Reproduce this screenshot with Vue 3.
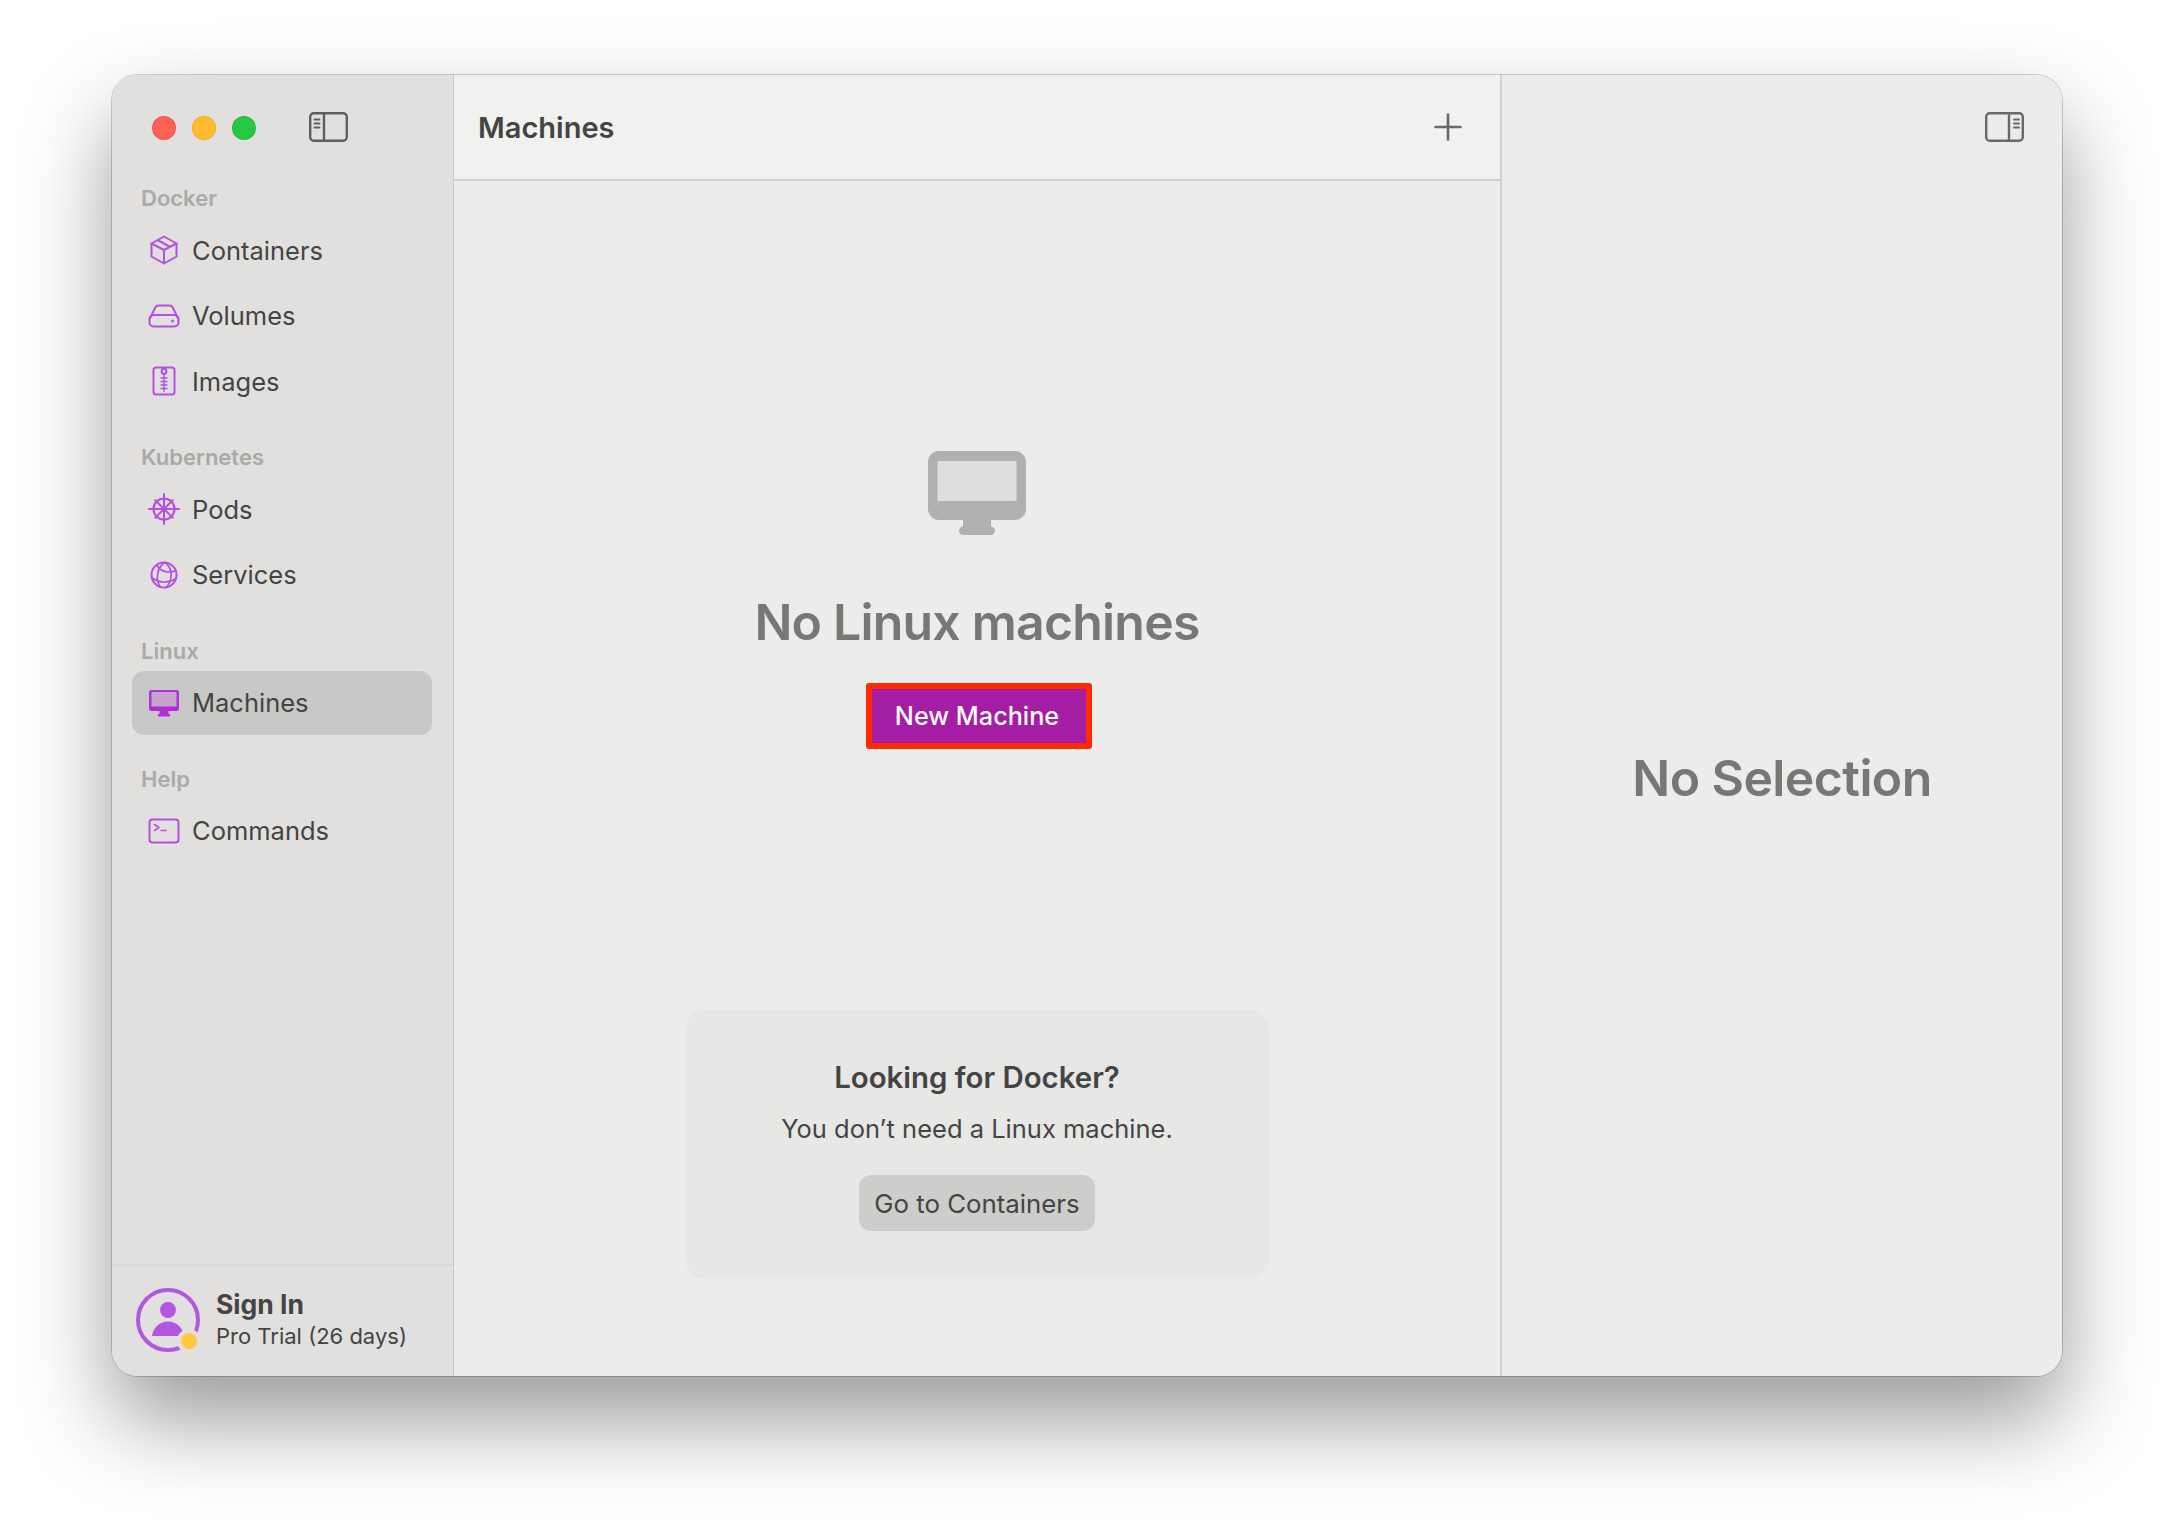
<script setup>
const sections = [
  { title: 'Docker', items: [{ label: 'Containers', icon: 'cube' }, { label: 'Volumes', icon: 'drive' }, { label: 'Images', icon: 'zip' }] },
  { title: 'Kubernetes', items: [{ label: 'Pods', icon: 'helm' }, { label: 'Services', icon: 'globe' }] },
  { title: 'Linux', items: [{ label: 'Machines', icon: 'mac', active: true }] },
  { title: 'Help', items: [{ label: 'Commands', icon: 'term' }] },
]
const spokes = [0, 45, 90, 135, 180, 225, 270, 315]
</script>

<template>
  <div class="page">
    <div class="window">
      <aside class="sidebar">
        <div class="titlebar">
          <span class="light red"></span>
          <span class="light yellow"></span>
          <span class="light green"></span>
          <svg class="toggle" width="39" height="30" viewBox="0 0 39 30" fill="none" stroke="#5e5e5c">
            <rect x="1.2" y="1.2" width="36.6" height="27.6" rx="3.5" stroke-width="2.4" />
            <path d="M15 1.5V28.5" stroke-width="2.4" />
            <path d="M5.5 7.5H10.5M5.5 11.5H10.5M5.5 15.5H10.5" stroke-width="1.8" stroke-linecap="round" />
          </svg>
        </div>
        <nav class="nav">
          <section v-for="s in sections" :key="s.title" class="section">
            <h3 class="section-title">{{ s.title }}</h3>
            <div class="rows">
              <div v-for="it in s.items" :key="it.label" class="row" :class="{ active: it.active }">
                <svg class="icon" width="32" height="32" viewBox="0 0 32 32" fill="none" stroke="#b44fe0" stroke-width="2" stroke-linecap="round" stroke-linejoin="round">
                  <template v-if="it.icon === 'cube'">
                    <path d="M16 2.500L28.500 9.500V22.500L16 29.500L3.500 22.500V9.500Z" />
                    <path d="M3.500 9.500L16 16L28.500 9.500M16 16V29.500M9.500 6L22 12.800" />
                  </template>
                  <template v-else-if="it.icon === 'drive'">
                    <rect x="1.5" y="15" width="29" height="11.5" rx="4" />
                    <path d="M2.5 17.5L7 7.8Q8 5.5 10.5 5.5H21.5Q24 5.5 25 7.8L29.5 17.5" />
                    <circle cx="24.5" cy="21" r="1.5" fill="#b44fe0" stroke="none" />
                  </template>
                  <template v-else-if="it.icon === 'zip'">
                    <rect x="5.5" y="2.5" width="21" height="27" rx="2.5" />
                    <circle cx="16" cy="6.5" r="2.4" />
                    <path d="M16 9V26.5M13 13H19M13 16.5H19M13 20H19M13 23.5H19" stroke-width="1.4" />
                  </template>
                  <template v-else-if="it.icon === 'helm'">
                    <circle cx="16" cy="16" r="10.5" stroke-width="2.200" />
                    <circle cx="16" cy="16" r="2.6" fill="#b44fe0" stroke="none" />
                    <path v-for="a in spokes" :key="a" :transform="`rotate(${a} 16 16)`" :d="a % 90 === 0 ? 'M16 16V1' : 'M16 16V3.5'" stroke-width="2" />
                  </template>
                  <template v-else-if="it.icon === 'globe'">
                    <circle cx="16" cy="16" r="12.5" />
                    <path d="M17 3.500C9 8 7 21 12.500 28M17 3.500C25 9 25 22 18 28.500M9 6.500C13 13 21 14.500 28 11.500M3.800 18.500C10 24 20 24.500 27.500 20" stroke-width="1.700" />
                  </template>
                  <template v-else-if="it.icon === 'mac'">
                    <rect x="1" y="3" width="30" height="21" rx="2.5" fill="#b02fd8" stroke="none" />
                    <rect x="3.5" y="5" width="25" height="14.5" fill="#c6a6cc" stroke="none" />
                    <path d="M11.5 24H20.5V27H22V29.5H10V27H11.5Z" fill="#b02fd8" stroke="none" />
                  </template>
                  <template v-else>
                    <rect x="1.5" y="4.5" width="29" height="23" rx="3" />
                    <path d="M6.5 9.5L11 12.5L6.5 15.5M13 15.500H18" stroke-width="1.6" />
                  </template>
                </svg>
                <span class="row-label">{{ it.label }}</span>
              </div>
            </div>
          </section>
        </nav>
        <div class="account">
          <svg class="avatar" width="64" height="64" viewBox="0 0 64 64">
            <circle cx="32" cy="32" r="30" fill="none" stroke="#b457e0" stroke-width="4" />
            <circle cx="32" cy="22" r="8" fill="#b457e0" />
            <path d="M16 48C17 40 23 33.500 32 33.500C41 33.500 47 40 48 48Z" fill="#b457e0" />
            <circle cx="53" cy="53" r="12" fill="#e1e0de" />
            <circle cx="53" cy="53" r="8" fill="#fdc93f" />
          </svg>
          <div class="account-text">
            <div class="account-name">Sign In</div>
            <div class="account-plan">Pro Trial (26 days)</div>
          </div>
        </div>
      </aside>

      <main class="main">
        <header class="main-header">
          <h1 class="main-title">Machines</h1>
          <svg width="28" height="28" viewBox="0 0 28 28" stroke="#686866" stroke-width="2.6" stroke-linecap="round">
            <path d="M14 1.500V26.500M1.500 14H26.500" />
          </svg>
        </header>
        <div class="main-body">
          <svg class="monitor" width="98" height="84" viewBox="0 0 98 84">
            <rect width="98" height="69" rx="11" fill="#b0b0ae" />
            <rect x="9.500" y="10" width="79" height="40" rx="1" fill="#dfdedd" />
            <rect x="35" y="68" width="28" height="10" fill="#b0b0ae" />
            <rect x="31" y="75.500" width="36" height="8.500" rx="4.200" fill="#b0b0ae" />
          </svg>
          <h2 class="empty-title">No Linux machines</h2>
          <button class="new-btn">New Machine</button>
          <div class="docker-card">
            <div class="card-title">Looking for Docker?</div>
            <div class="card-text">You don’t need a Linux machine.</div>
            <button class="card-btn">Go to Containers</button>
          </div>
        </div>
      </main>

      <aside class="detail">
        <svg class="detail-toggle" width="39" height="30" viewBox="0 0 39 30" fill="none" stroke="#686866">
          <rect x="1.2" y="1.2" width="36.6" height="27.6" rx="3.5" stroke-width="2.4" />
          <path d="M24 1.500V28.500" stroke-width="2.400" />
          <path d="M29 7.500H34M29 11.500H34M29 15.500H34" stroke-width="1.800" stroke-linecap="round" />
        </svg>
        <div class="no-selection">No Selection</div>
      </aside>
    </div>
  </div>
</template>

<style>
html, body { margin: 0; background: #fff; }
</style>

<style scoped>
.page {
  height: 1524px;
  box-sizing: border-box;
  padding: 75px 112px 0;
  font-family: Inter, "Liberation Sans", sans-serif;
  color: #444443;
  overflow: hidden;
}
.window {
  width: 1950px;
  height: 1301px;
  display: flex;
  border-radius: 26px;
  overflow: hidden;
  box-shadow: 0 0 0 1px rgba(0, 0, 0, .18), 0 44px 90px rgba(0, 0, 0, .4);
}
.sidebar {
  width: 342px;
  flex: none;
  box-sizing: border-box;
  display: flex;
  flex-direction: column;
  background: #e1e0de;
  border-right: 1px solid #c9c9c7;
}
.titlebar {
  height: 101px;
  padding: 2px 0 0 40px;
  display: flex;
  align-items: center;
  gap: 16px;
}
.light { width: 24px; height: 24px; border-radius: 50%; box-sizing: border-box; border: 1px solid rgba(0,0,0,.08); }
.red { background: #ff5f57; }
.yellow { background: #febc2e; }
.green { background: #28c840; }
.toggle { margin: -2px 0 0 37px; }
.nav { flex: 1; }
.section { margin-bottom: 24px; }
.section-title {
  margin: 0;
  height: 40px;
  padding-left: 29px;
  font-size: 22px;
  font-weight: 600;
  line-height: 40px;
  color: #a9a9a8;
}
.rows { display: grid; gap: 1.5px; }
.row {
  height: 64px;
  margin: 0 21px 0 20px;
  padding-left: 16px;
  display: flex;
  align-items: center;
  gap: 12px;
  border-radius: 12px;
}
.row.active { background: #c8c8c7; }
.row-label { font-size: 25.5px; }
.account {
  height: 112px;
  box-sizing: border-box;
  border-top: 2px solid #d9d8d6;
  padding: 0 0 3px 24px;
  display: flex;
  align-items: center;
  gap: 16px;
}
.account-name { font-size: 26.500px; font-weight: 700; line-height: 33px; }
.account-plan { font-size: 22px; line-height: 30px; }

.main {
  flex: 1;
  min-width: 0;
  display: flex;
  flex-direction: column;
  background: #ececea;
  border-right: 2px solid #d0d0ce;
}
.main-header {
  height: 106px;
  flex: none;
  box-sizing: border-box;
  padding: 0 38px 0 24px;
  display: flex;
  align-items: center;
  justify-content: space-between;
  background: #f1f1ef;
  border-bottom: 2px solid #d0d0ce;
}
.main-title { margin: 0; font-size: 29px; font-weight: 600; }
.main-body {
  flex: 1;
  display: flex;
  flex-direction: column;
  align-items: center;
  padding: 270px 0 97px;
  box-sizing: border-box;
}
.empty-title {
  margin: 52px 0 0;
  font-size: 50px;
  line-height: 70px;
  font-weight: 600;
  letter-spacing: -0.8px;
  color: #777775;
}
.new-btn {
  margin: 26px 0 0 4px;
  width: 226px;
  height: 66px;
  box-sizing: border-box;
  padding: 0 4px 0 0;
  background: #a51ca5;
  border: 6px solid #ff2a00;
  border-radius: 3px;
  color: #fff;
  font: 500 25.2px Inter, "Liberation Sans", sans-serif;
}
.docker-card {
  margin-top: auto;
  width: 584px;
  height: 269px;
  box-sizing: border-box;
  padding-top: 48px;
  display: flex;
  flex-direction: column;
  align-items: center;
  background: #e7e7e6;
  border-radius: 20px;
}
.card-title { font-size: 29.400px; font-weight: 600; line-height: 40px; }
.card-text { margin-top: 11px; font-size: 25.500px; line-height: 40px; }
.card-btn {
  margin-top: 26px;
  width: 236px;
  height: 56px;
  padding: 0;
  border: 0;
  border-radius: 12px;
  background: #cdcdcc;
  color: #444443;
  font: 400 25.800px Inter, "Liberation Sans", sans-serif;
}

.detail {
  width: 560px;
  flex: none;
  box-sizing: border-box;
  position: relative;
  padding-top: 105px;
  display: flex;
  align-items: center;
  justify-content: center;
  background: #ececea;
}
.detail-toggle { position: absolute; top: 37px; right: 38px; }
.no-selection { font-size: 50px; font-weight: 600; letter-spacing: -0.6px; color: #777775; }
</style>
